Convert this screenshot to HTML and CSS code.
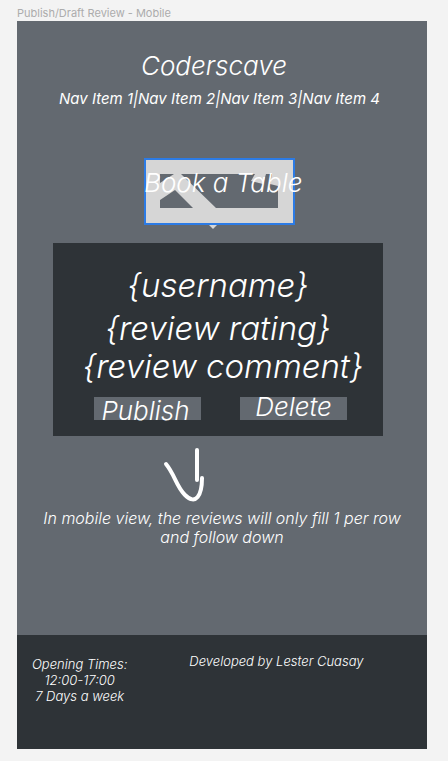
FILE: index.html
```html
<!DOCTYPE html>
<html lang="en">
<head>
<meta charset="utf-8">
<meta name="viewport" content="width=device-width, initial-scale=1">
<title>Publish/Draft Review - Mobile</title>
<link rel="stylesheet" href="styles.css">
</head>
<body>
<p class="frame-label">Publish/Draft Review - Mobile</p>
<div class="frame">
  <header class="header">
    <h1 class="title">Coderscave</h1>
    <nav class="nav"><a href="#">Nav Item 1</a>|<a href="#">Nav Item 2</a>|<a href="#">Nav Item 3</a>|<a href="#">Nav Item 4</a></nav>
  </header>
  <main class="main">
    <a class="booking" href="#">
      <svg class="booking-art" viewBox="0 0 152 72" aria-hidden="true">
        <path fill="#d6d6d6" d="M0 0h151v67H0zM65 67h8l-4 4z"/>
        <path fill="#636970" d="M16 16h14L16 25zM16 42l15-10 18 18H16zM37 16h74l-4 7 12 3 3-10h6l-2 10 8 2v22H72z"/>
        <path fill="none" stroke="#2c7be5" stroke-width="2" d="M1 1h149v65H1z"/>
      </svg>
      <span class="booking-text">Book a Table</span>
    </a>
    <section class="card">
      <p class="username">{username}</p>
      <p class="rating">{review rating}</p>
      <p class="comment">{review comment}</p>
      <div class="actions">
        <button class="action publish" type="button">Publish</button>
        <button class="action delete" type="button">Delete</button>
      </div>
    </section>
    <svg class="arrow" viewBox="0 0 42 56" aria-hidden="true">
      <path d="M34 3v30M3 17C12 28 13 39 22 48C33 59 39 48 39 31"/>
    </svg>
    <p class="note">In mobile view, the reviews will only fill 1 per row and follow down</p>
  </main>
  <footer class="footer">
    <p class="hours">Opening Times:<br>12:00-17:00<br>7 Days a week</p>
    <p class="credit">Developed by Lester Cuasay</p>
  </footer>
</div>
</body>
</html>
```
FILE: styles.css
```css
* {
  box-sizing: border-box;
}

body {
  margin: 0;
  padding: 5px 21px 12px 17px;
  background: #f3f3f3;
  font-family: Inter, "Liberation Sans", sans-serif;
}

h1,
p {
  margin: 0;
  font-weight: inherit;
}

a {
  color: inherit;
  text-decoration: none;
}

.frame-label {
  color: #acacac;
  font-size: 11px;
  line-height: 16px;
}

.frame {
  background: #636970;
  color: #fff;
  font-style: italic;
  font-weight: 300;
}

.header {
  padding-top: 29px;
  text-align: center;
}

.title {
  padding-right: 16px;
  font-size: 26px;
  line-height: 32px;
}

.nav {
  padding: 7px 5px 0 0;
  font-size: 15px;
  font-weight: 400;
  line-height: 20px;
  white-space: nowrap;
}

.main {
  display: flex;
  flex-direction: column;
  align-items: center;
  padding: 49px 0 88px;
}

.booking {
  position: relative;
  width: 152px;
  height: 72px;
  margin-right: 4px;
}

.booking-art {
  display: block;
  width: 152px;
  height: 72px;
}

.booking-text {
  position: absolute;
  top: 9px;
  left: 0;
  font-size: 26px;
  line-height: 32px;
  white-space: nowrap;
}

.card {
  align-self: stretch;
  margin: 13px 44px 0 36px;
  padding: 22px 0 16px;
  background: #2e3337;
  text-align: center;
}

.username,
.rating,
.comment {
  font-size: 33px;
  font-weight: 350;
  line-height: 40px;
}

.rating {
  margin-top: 3px;
}

.comment {
  margin-top: -2px;
  padding-left: 10px;
  white-space: nowrap;
}

.actions {
  display: flex;
  justify-content: space-between;
  margin: 11px 36px 0 41px;
}

.action {
  display: flex;
  justify-content: center;
  align-items: center;
  width: 107px;
  height: 23px;
  padding: 0;
  border: 0;
  background: #636970;
  color: inherit;
  font: inherit;
  font-size: 26px;
  line-height: 32px;
}

.publish {
  padding: 4px 4px 0 0;
}

.delete {
  padding-bottom: 4px;
}

.arrow {
  width: 42px;
  height: 56px;
  margin: 11px 76px 0 0;
  fill: none;
  stroke: #fff;
  stroke-width: 4;
  stroke-linecap: round;
}

.note {
  max-width: 370px;
  margin-top: 6px;
  font-size: 16px;
  line-height: 19px;
  text-align: center;
}

.footer {
  display: flex;
  align-items: flex-start;
  min-height: 114px;
  padding: 18px 15px;
  background: #2e3337;
}

.hours {
  padding-top: 3px;
  font-size: 13px;
  line-height: 16px;
  text-align: center;
}

.credit {
  margin-left: 62px;
  font-size: 13px;
  line-height: 16px;
}
```
